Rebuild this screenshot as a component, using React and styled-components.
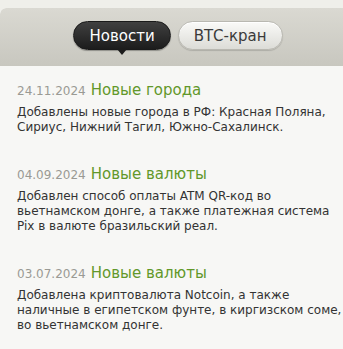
import styled, { createGlobalStyle } from "styled-components";

const GlobalStyle = createGlobalStyle`
  html, body {
    margin: 0;
    padding: 0;
    background: #efefea;
  }
  body {
    font-family: "DejaVu Sans", Verdana, sans-serif;
  }
`;

const Page = styled.div`
  width: 343px;
  height: 349px;
  overflow: hidden;
  padding-top: 8px;
  box-sizing: border-box;
`;

const Panel = styled.div`
  background: #f7f7f5;
  border-top-left-radius: 6px;
  height: 100%;
  overflow: hidden;
`;

const TabBar = styled.div`
  height: 58px;
  display: flex;
  justify-content: center;
  align-items: flex-start;
  gap: 7px;
  padding-top: 13px;
  padding-left: 13px;
  box-sizing: border-box;
  background: linear-gradient(#dad9d2, #c8c7bf);
  border-top-left-radius: 6px;
`;

const Tab = styled.div`
  position: relative;
  height: 29px;
  padding: 0 15px;
  display: flex;
  align-items: center;
  border-radius: 15px;
  font-size: 15px;
  box-sizing: border-box;
  color: ${(p) => (p.active ? "#ffffff" : "#3a3a3a")};
  background: ${(p) =>
    p.active
      ? "linear-gradient(#404040, #1c1c1c)"
      : "linear-gradient(#fafaf8, #dcdcd7)"};
  border: 1px solid ${(p) => (p.active ? "#1a1a1a" : "#b9b8b1")};
  box-shadow: ${(p) =>
    p.active ? "0 1px 1px rgba(0,0,0,0.3)" : "inset 0 1px 0 #fff, 0 1px 1px rgba(0,0,0,0.15)"};

  &::after {
    content: "";
    display: ${(p) => (p.active ? "block" : "none")};
    position: absolute;
    left: 50%;
    bottom: -6px;
    margin-left: -5px;
    border-left: 5px solid transparent;
    border-right: 5px solid transparent;
    border-top: 6px solid #1c1c1c;
  }
`;

const List = styled.div`
  padding: 14px 0 0 17px;
`;

const Entry = styled.div`
  margin-bottom: 29px;
`;

const Heading = styled.div`
  line-height: 20px;
  margin-bottom: 4px;
`;

const Date = styled.span`
  font-size: 12px;
  color: #9a9a94;
`;

const Title = styled.span`
  font-size: 15px;
  color: #62982a;
`;

const Body = styled.div`
  font-size: 12px;
  line-height: 15px;
  color: #333333;
`;

const news = [
  {
    date: "24.11.2024",
    title: "Новые города",
    text: "Добавлены новые города в РФ: Красная Поляна, Сириус, Нижний Тагил, Южно-Сахалинск.",
  },
  {
    date: "04.09.2024",
    title: "Новые валюты",
    text: "Добавлен способ оплаты ATM QR-код во вьетнамском донге, а также платежная система Pix в валюте бразильский реал.",
  },
  {
    date: "03.07.2024",
    title: "Новые валюты",
    text: "Добавлена криптовалюта Notcoin, а также наличные в египетском фунте, в киргизском соме, во вьетнамском донге.",
  },
];

export default function App() {
  return (
    <Page>
      <GlobalStyle />
      <Panel>
        <TabBar>
          <Tab active>Новости</Tab>
          <Tab>ВТС-кран</Tab>
        </TabBar>
        <List>
          {news.map((n, i) => (
            <Entry key={i}>
              <Heading>
                <Date>{n.date}</Date> <Title>{n.title}</Title>
              </Heading>
              <Body>{n.text}</Body>
            </Entry>
          ))}
        </List>
      </Panel>
    </Page>
  );
}
